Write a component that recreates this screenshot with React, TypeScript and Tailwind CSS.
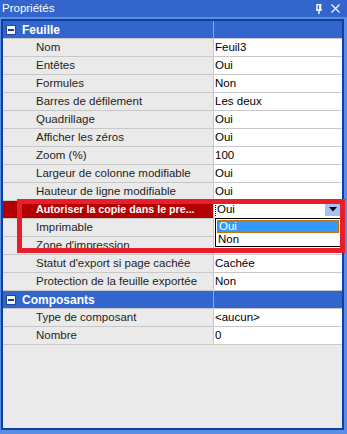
import React from "react";

type Row = { name: string; value: string; selected?: boolean };

const feuille: Row[] = [
  { name: "Nom", value: "Feuil3" },
  { name: "Entêtes", value: "Oui" },
  { name: "Formules", value: "Non" },
  { name: "Barres de défilement", value: "Les deux" },
  { name: "Quadrillage", value: "Oui" },
  { name: "Afficher les zéros", value: "Oui" },
  { name: "Zoom (%)", value: "100" },
  { name: "Largeur de colonne modifiable", value: "Oui" },
  { name: "Hauteur de ligne modifiable", value: "Oui" },
  { name: "Autoriser la copie dans le pre...", value: "Oui", selected: true },
  { name: "Imprimable", value: "" },
  { name: "Zone d'impression", value: "" },
  { name: "Statut d'export si page cachée", value: "Cachée" },
  { name: "Protection de la feuille exportée", value: "Non" },
];

const composants: Row[] = [
  { name: "Type de composant", value: "<aucun>" },
  { name: "Nombre", value: "0" },
];

function Header({ title }: { title: string }) {
  return (
    <div className="flex h-[18px] border-b border-[#c8c8c8] bg-[#3366cc]">
      <div className="flex w-[210px] items-center">
        <div className="ml-[3px] flex h-[10px] w-[10px] items-center justify-center border border-[#25449a] bg-[#f4f6fb]">
          <div className="h-[2px] w-[6px] bg-[#1d3a8a]" />
        </div>
        <span className="ml-[6px] whitespace-nowrap text-[12px] font-bold leading-none text-white">{title}</span>
      </div>
      <div className="w-px bg-[#9aa9c9]" />
      <div className="flex-1" />
    </div>
  );
}

function PropRow({ row }: { row: Row }) {
  if (row.selected) {
    return (
      <div className="flex h-[18px] border-b border-[#c8c8c8]">
        <div className="flex w-[210px] items-center overflow-hidden bg-[#b30000] pl-[33px]">
          <span className="whitespace-nowrap text-[10.7px] font-bold leading-none text-white">{row.name}</span>
        </div>
        <div className="w-px bg-[#c8c8c8]" />
        <div className="flex flex-1 items-center bg-white pr-[2px]">
          <div className="ml-px h-[13px] border-l border-dotted border-black" />
          <span className="ml-[1px] flex-1 text-[11.5px] leading-none text-black">{row.value}</span>
          <div className="flex h-[13px] w-[15px] items-center justify-center bg-[#a9c1f2]">
            <svg width="8" height="5" viewBox="0 0 8 5">
              <path d="M0 0 L8 0 L4 4.5 Z" fill="#000" />
            </svg>
          </div>
        </div>
      </div>
    );
  }
  return (
    <div className="flex h-[18px] border-b border-[#c8c8c8]">
      <div className="flex w-[210px] items-center pl-[33px]">
        <span className="whitespace-nowrap text-[11.5px] leading-none text-[#1e1e1e]">{row.name}</span>
      </div>
      <div className="w-px bg-[#c8c8c8]" />
      <div className="flex flex-1 items-center bg-white pl-[1px]">
        <span className="whitespace-nowrap text-[11.5px] leading-none text-black">{row.value}</span>
      </div>
    </div>
  );
}

export default function App() {
  return (
    <div
      className="relative flex h-[434px] w-[347px] flex-col overflow-hidden bg-[#5b8de3]"
      style={{ fontFamily: "Tahoma, 'Liberation Sans', Arial, sans-serif" }}
    >
      <div className="flex h-[17px] items-center bg-[#3366cc] pl-[2px] pr-[7px]">
        <span className="flex-1 text-[11.5px] leading-none text-white">Propriétés</span>
        <svg width="8" height="10" viewBox="0 0 8 10" className="mr-[8px]">
          <path d="M1.5 0.5 H6.5 M2 0.5 V6 M5.5 0.5 V6 M1 6 H7 M4 6 V10" stroke="#fff" strokeWidth="1.4" fill="none" />
          <rect x="4.2" y="0.5" width="1.3" height="5.5" fill="#fff" />
        </svg>
        <svg width="9" height="9" viewBox="0 0 9 9">
          <path d="M0.5 0.5 L8.5 8.5 M8.5 0.5 L0.5 8.5" stroke="#fff" strokeWidth="1.1" />
        </svg>
      </div>
      <div className="flex flex-1 pb-[4px] pl-px pr-[3px] pt-[2px]">
        <div className="flex flex-1 flex-col border-2 border-[#0d3fa6] bg-[#eaeaea]">
          <Header title="Feuille" />
          {feuille.map((r) => (
            <PropRow key={r.name} row={r} />
          ))}
          <Header title="Composants" />
          {composants.map((r) => (
            <PropRow key={r.name} row={r} />
          ))}
        </div>
      </div>

      {/* dropdown list */}
      <div className="absolute left-[215px] top-[218px] flex h-[29px] w-[126px] flex-col border border-black bg-white">
        <div className="mx-px mt-px flex h-[13px] items-center border border-dotted border-[#c07000] bg-[#3399ff] pl-px">
          <span className="text-[11.5px] leading-none text-white">Oui</span>
        </div>
        <div className="flex flex-1 items-center pl-[2px]">
          <span className="text-[11.5px] leading-none text-black">Non</span>
        </div>
      </div>

      {/* annotation rectangle */}
      <div className="pointer-events-none absolute left-[17px] top-[199px] h-[54px] w-[328px] border-[5px] border-[#e81f2a]" />
    </div>
  );
}
